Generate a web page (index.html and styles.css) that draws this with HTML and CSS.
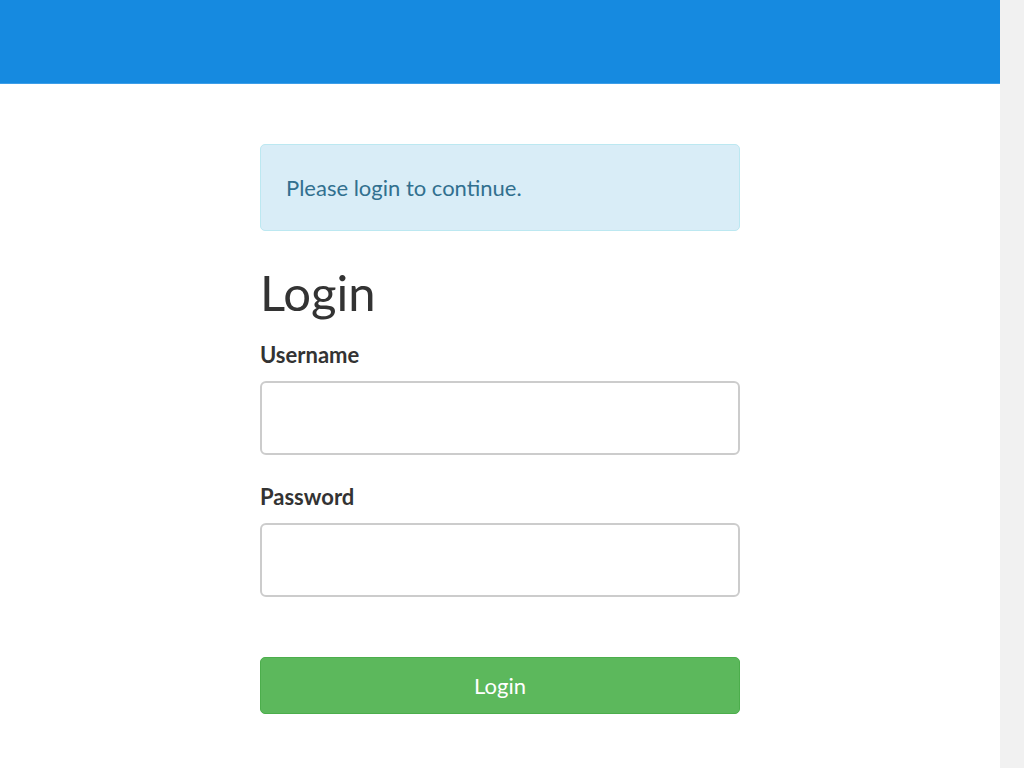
FILE: index.html
```html
<!DOCTYPE html>
<html lang="en">
<head>
    <meta charset="UTF-8">
    <meta name="viewport" content="width=device-width, initial-scale=1.0">
    <title>Login</title>
    <link rel="stylesheet" href="styles.css">
</head>
<body>

    <div class="navbar"></div>

    <div class="container">
        <div class="alert">Please login to continue.</div>

        <h1>Login</h1>
        <form id="login-form">
            <div class="form-group">
                <label for="username">Username</label>
                <input type="text" id="username" name="username">
            </div>

            <div class="form-group">
                <label for="password">Password</label>
                <input type="password" id="password" name="password">
            </div>

            <button type="submit">Login</button>
        </form>
    </div>

</body>
</html>
```

FILE: styles.css
```css
html {
    background-color: #f1f1f1;
}

body {
    font-family: Lato, "Open Sans", sans-serif;
    color: #333;
    background-color: #fff;
    margin: 0 24px 0 0;
    min-height: 100vh;
}

.navbar {
    height: 83px;
    background-color: #168ae0;
    border-bottom: 1px solid #3d9ee8;
}

.container {
    width: 480px;
    margin: 60px auto 0 auto;
    padding-bottom: 239px;
}

.alert {
    background-color: #d9edf7;
    border: 1px solid #bce8f1;
    border-radius: 5px;
    color: #31708f;
    font-size: 22px;
    line-height: 27px;
    padding: 29px 25px;
}

h1 {
    font-size: 49px;
    font-weight: 400;
    line-height: 53px;
    margin: 35px 0 23px 0;
}

.form-group {
    margin-bottom: 29px;
}

label {
    display: block;
    font-size: 22px;
    line-height: 26px;
    font-weight: 700;
    margin-bottom: 13px;
}

input {
    display: block;
    width: 100%;
    height: 74px;
    padding: 10px 16px;
    border: 2px solid #ccc;
    border-radius: 6px;
    font-size: 20px;
    box-sizing: border-box;
}

input:focus {
    outline: none;
    border-color: #66afe9;
}

button {
    display: block;
    width: 100%;
    height: 57px;
    margin-top: 60px;
    background-color: #5cb85c;
    border: 1px solid #4cae4c;
    border-radius: 5px;
    color: #fff;
    font-family: inherit;
    font-size: 22px;
    cursor: pointer;
}

button:hover {
    background-color: #449d44;
}
```
